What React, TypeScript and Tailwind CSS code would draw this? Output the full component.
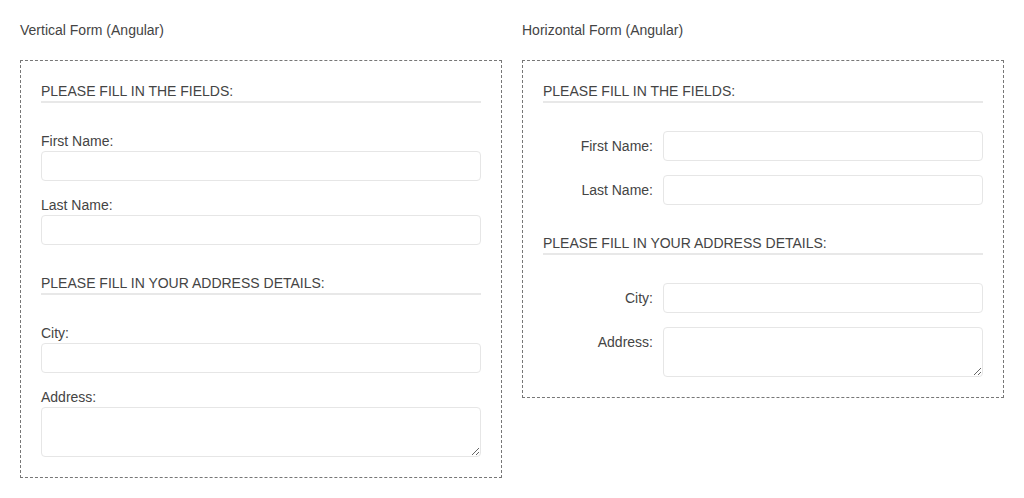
import React from "react";

const inputCls =
  "block w-full h-[30px] rounded-[4px] border border-[#e6e6e6] bg-white px-2 text-[14px] outline-none";
const taCls =
  "block w-full h-[50px] rounded-[4px] border border-[#e6e6e6] bg-white px-2 text-[14px] outline-none";

function Heading({ children }: { children: React.ReactNode }) {
  return (
    <div className="h-[22px] border-b-2 border-[#e8e8e8] text-[14px] leading-[20px] text-[#444]">
      {children}
    </div>
  );
}

function VField({ label, area }: { label: string; area?: boolean }) {
  return (
    <div>
      <div className="text-[14px] leading-[20px] text-[#444]">{label}</div>
      {area ? <textarea className={taCls} /> : <input className={inputCls} />}
    </div>
  );
}

function HField({ label, area }: { label: string; area?: boolean }) {
  return (
    <div className="flex gap-[10px]">
      <div className="w-[110px] shrink-0 pt-[5px] text-right text-[14px] leading-[20px] text-[#444]">
        {label}
      </div>
      <div className="flex-1">
        {area ? <textarea className={taCls} /> : <input className={inputCls} />}
      </div>
    </div>
  );
}

export default function App() {
  return (
    <div
      className="flex gap-[20px] bg-white px-[20px] pt-[20px] pb-[20px]"
      style={{ fontFamily: '"Liberation Sans", Arial, sans-serif' }}
    >
      <div className="w-[482px]">
        <div className="h-[20px] text-[14px] leading-[20px] text-[#444]">Vertical Form (Angular)</div>
        <div className="mt-[20px] border border-dashed border-[#777] p-[20px]">
          <Heading>PLEASE FILL IN THE FIELDS:</Heading>
          <div className="mt-[28px] flex flex-col gap-[14px]">
            <VField label="First Name:" />
            <VField label="Last Name:" />
          </div>
          <div className="mt-[28px]">
            <Heading>PLEASE FILL IN YOUR ADDRESS DETAILS:</Heading>
          </div>
          <div className="mt-[28px] flex flex-col gap-[14px]">
            <VField label="City:" />
            <VField label="Address:" area />
          </div>
        </div>
      </div>
      <div className="w-[482px]">
        <div className="h-[20px] text-[14px] leading-[20px] text-[#444]">Horizontal Form (Angular)</div>
        <div className="mt-[20px] border border-dashed border-[#777] p-[20px]">
          <Heading>PLEASE FILL IN THE FIELDS:</Heading>
          <div className="mt-[28px] flex flex-col gap-[14px]">
            <HField label="First Name:" />
            <HField label="Last Name:" />
          </div>
          <div className="mt-[28px]">
            <Heading>PLEASE FILL IN YOUR ADDRESS DETAILS:</Heading>
          </div>
          <div className="mt-[28px] flex flex-col gap-[14px]">
            <HField label="City:" />
            <HField label="Address:" area />
          </div>
        </div>
      </div>
    </div>
  );
}
